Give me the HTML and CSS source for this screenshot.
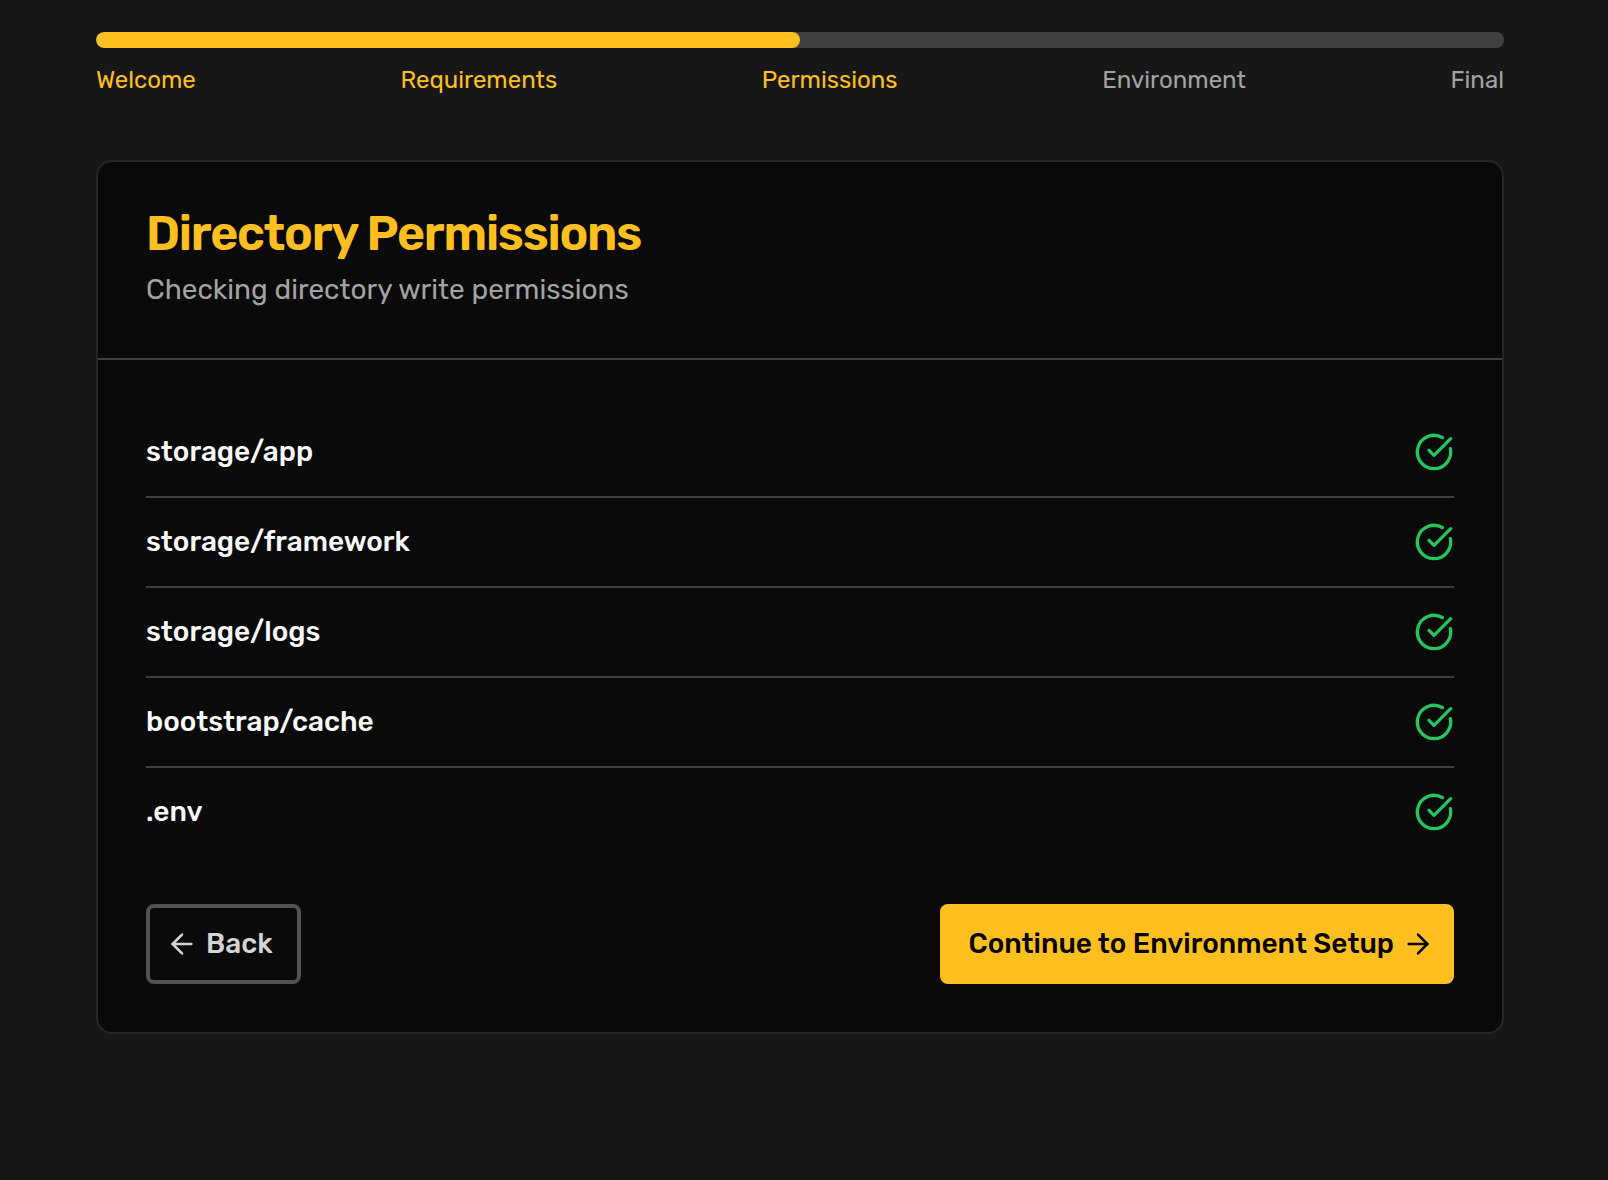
FILE: index.html
```
<!DOCTYPE html>
<html lang="en">
<head>
<meta charset="utf-8">
<title>Directory Permissions</title>
<link rel="stylesheet" href="styles.css">
</head>
<body>
<svg class="sprite" aria-hidden="true">
  <symbol id="check" viewBox="0 0 24 24"><path d="M21.801 10A10 10 0 1 1 17 3.335"/><path d="m9 11 3 3L22 4"/></symbol>
  <symbol id="arrow-left" viewBox="0 0 24 24"><path d="m12 19-7-7 7-7"/><path d="M19 12H5"/></symbol>
  <symbol id="arrow-right" viewBox="0 0 24 24"><path d="M5 12h14"/><path d="m12 5 7 7-7 7"/></symbol>
</svg>
<main class="installer">
  <div class="progress"><div class="progress-fill" style="width: 50%"></div></div>
  <nav class="steps">
    <span class="step done">Welcome</span>
    <span class="step done">Requirements</span>
    <span class="step done">Permissions</span>
    <span class="step">Environment</span>
    <span class="step">Final</span>
  </nav>
  <section class="card">
    <header class="card-header">
      <h1>Directory Permissions</h1>
      <p>Checking directory write permissions</p>
    </header>
    <div class="card-body">
      <ul class="checks">
        <li><span>storage/app</span><svg class="icon check"><use href="#check"/></svg></li>
        <li><span>storage/framework</span><svg class="icon check"><use href="#check"/></svg></li>
        <li><span>storage/logs</span><svg class="icon check"><use href="#check"/></svg></li>
        <li><span>bootstrap/cache</span><svg class="icon check"><use href="#check"/></svg></li>
        <li><span>.env</span><svg class="icon check"><use href="#check"/></svg></li>
      </ul>
      <div class="actions">
        <a class="button back"><svg class="icon arrow"><use href="#arrow-left"/></svg><span>Back</span></a>
        <a class="button next"><span>Continue to Environment Setup</span><svg class="icon arrow"><use href="#arrow-right"/></svg></a>
      </div>
    </div>
  </section>
</main>
</body>
</html>
```
FILE: styles.css
```
* { box-sizing: border-box; margin: 0; padding: 0; }
body {
  min-height: 100vh;
  background: #171717;
  color: #fafafa;
  font-family: Rubik, Roboto, sans-serif;
  font-size: 28px;
  line-height: 40px;
}
.sprite { display: none; }
.installer { width: 1408px; margin: 0 auto 0 96px; padding-top: 32px; }
.progress { height: 16px; border-radius: 8px; background: #404040; overflow: hidden; }
.progress-fill { height: 100%; border-radius: 8px; background: #ffc01f; }
.steps { display: flex; justify-content: space-between; margin-top: 16px; font-size: 24px; line-height: 32px; }
.step { color: #a3a3a3; }
.step.done { color: #ffc01f; }
.card { margin-top: 64px; border: 2px solid #262626; border-radius: 16px; background: #0a0a0a; }
.card-header { height: 198px; padding: 48px; border-bottom: 2px solid #404040; }
h1 { font-size: 48px; line-height: 48px; font-weight: 600; letter-spacing: -0.025em; color: #ffc01f; }
.card-header p { margin-top: 12px; color: #a3a3a3; }
.card-body { padding: 48px; }
.checks { list-style: none; }
.checks li { display: flex; align-items: center; justify-content: space-between; height: 90px; border-bottom: 2px solid #404040; font-weight: 500; }
.checks li:last-child { height: 88px; border-bottom: 0; }
.icon { fill: none; stroke: currentColor; stroke-width: 2; stroke-linecap: round; stroke-linejoin: round; }
.check { width: 40px; height: 40px; color: #22c55e; }
.actions { display: flex; justify-content: space-between; margin-top: 48px; }
.button { display: flex; align-items: center; gap: 8px; height: 80px; border-radius: 8px; font-weight: 500; white-space: nowrap; }
.arrow { width: 32px; height: 32px; stroke-width: 1.9; }
.back { padding: 0 24px 0 16px; border: 4px solid #525252; color: #d4d4d4; }
.next { padding: 0 20px 0 28px; background: #ffc01f; color: #000; }
```
